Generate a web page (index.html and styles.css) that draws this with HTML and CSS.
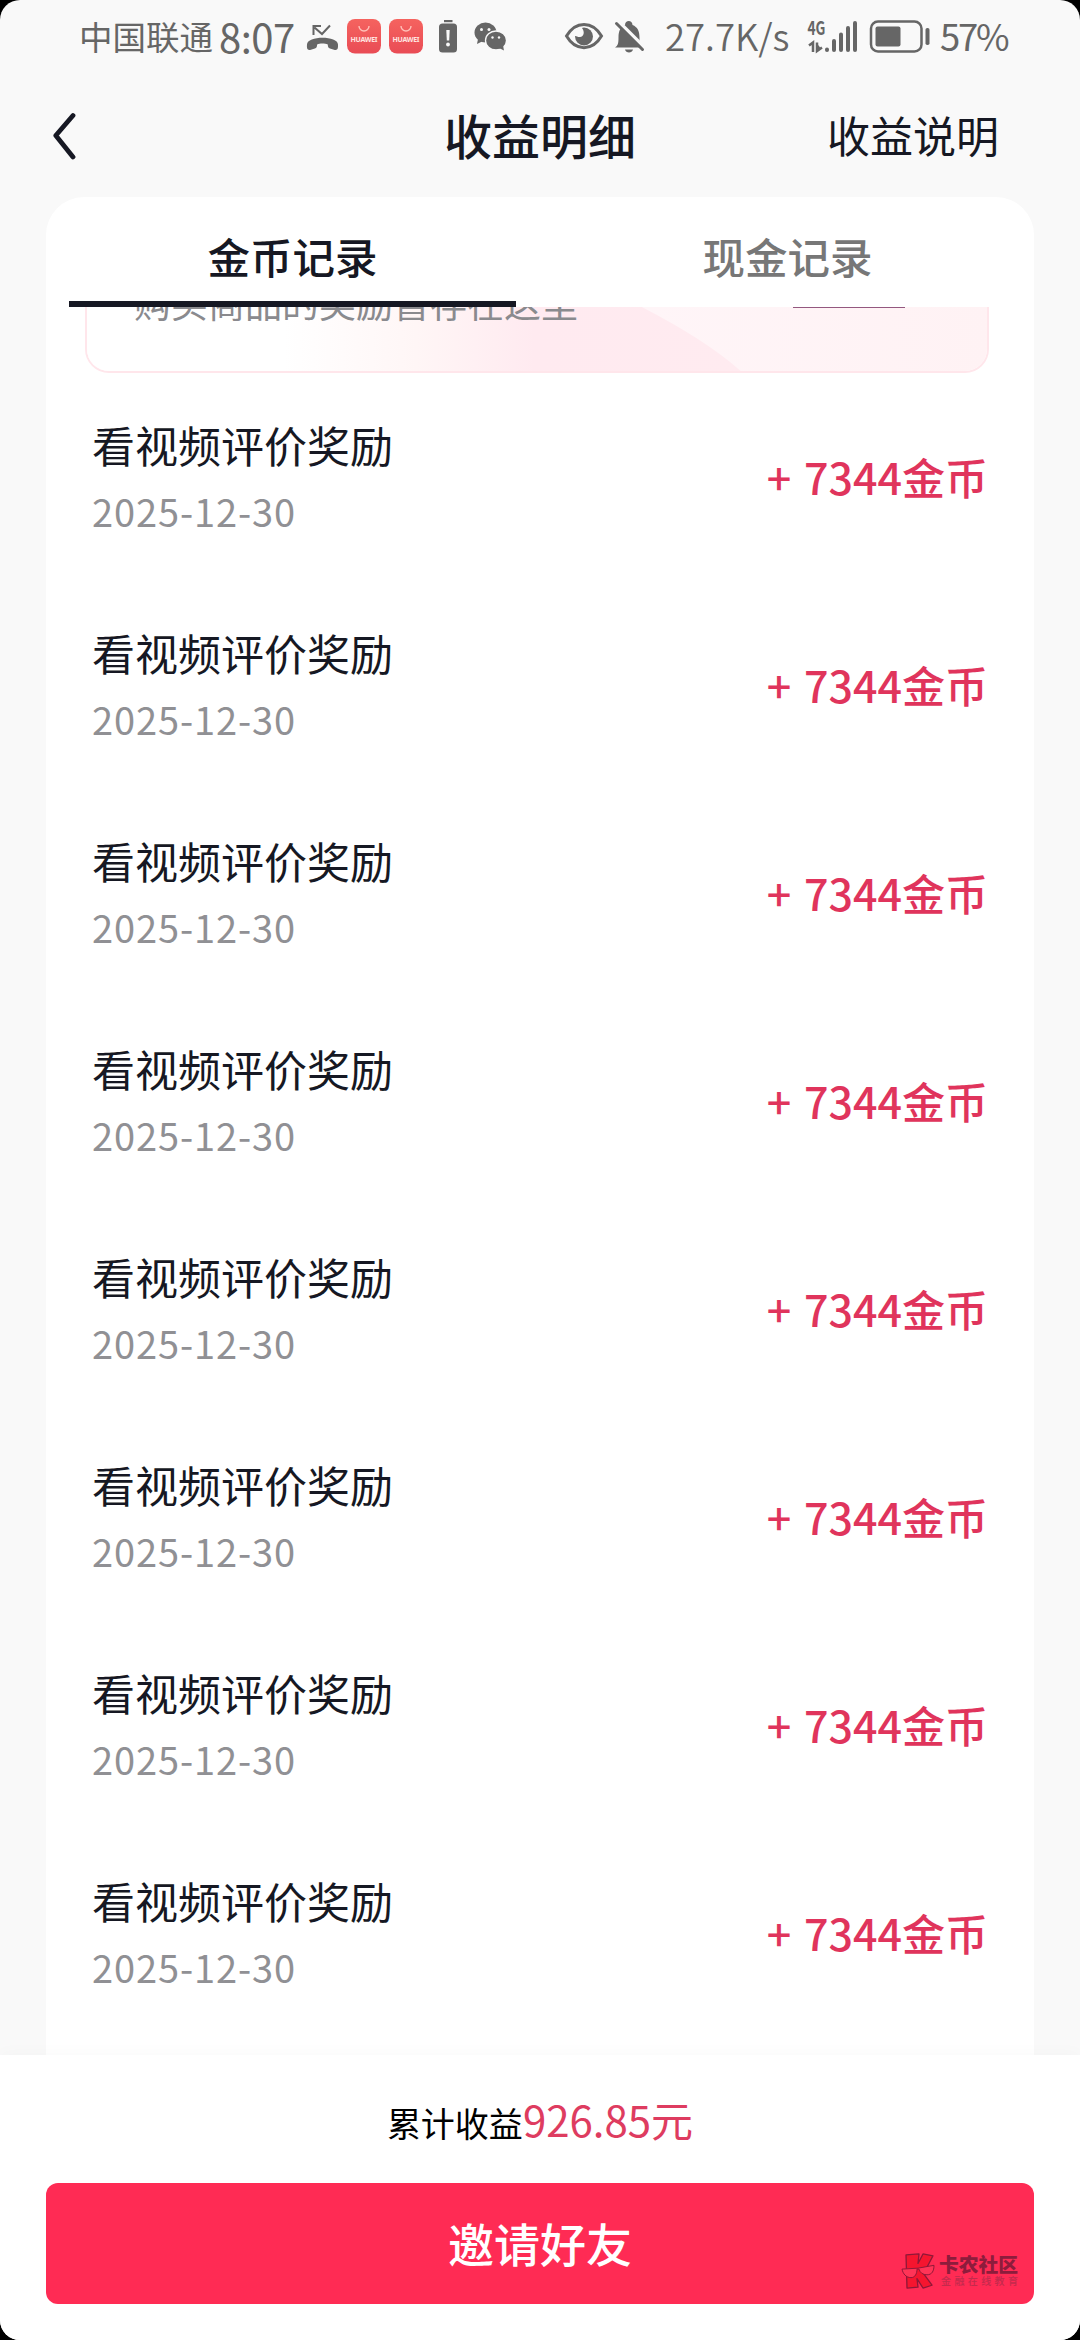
FILE: index.html
```html
<!DOCTYPE html>
<html lang="zh-CN">
<head>
<meta charset="utf-8">
<title>收益明细</title>
<link rel="stylesheet" href="styles.css">
</head>
<body>
<div class="screen">
  <div class="status">
    <span class="carrier">中国联通</span>
    <span class="clock">8:07</span>
    <svg class="ic ic-call" width="34" height="40" viewBox="305 18 34 40"><path d="M307 45.500c0-9 31-9 31 0v2c0 3.500-2 3.800-4 3.200l-4-1.200c-1.600-.5-2.200-1.500-2.200-4-3-1.300-8-1.300-10.700 0 0 2.500-.6 3.500-2.200 4l-4 1.200c-2 .6-4 .3-4-3.200z" fill="#666"/><path d="M313.500 36V27H321M314.500 28.500l7.500 6.500L330 26.500" fill="none" stroke="#666" stroke-width="2"/></svg>
    <svg class="ic ic-app1" width="34" height="40" viewBox="0 0 34 40"><use href="#hw"/></svg>
    <svg class="ic ic-app2" width="34" height="40" viewBox="0 0 34 40">
      <defs><linearGradient id="g" x2="0" y2="1"><stop stop-color="#f5635f"/><stop offset="1" stop-color="#e94c55"/></linearGradient></defs>
      <g id="hw"><rect y="2" width="34" height="34.500" rx="8" fill="url(#g)"/><path d="M12 9a5 5 0 0 0 10 0" fill="none" stroke="#ffc0b8" stroke-width="1.400"/><text x="17" y="24.500" text-anchor="middle" textLength="27" class="hw-text">HUAWEI</text></g>
    </svg>
    <svg class="ic ic-alert" width="20" height="40" viewBox="438 18 20 40"><rect x="444" y="21" width="8.500" height="2.200" fill="#666"/><rect x="439" y="24.500" width="18" height="29" rx="3.500" fill="#666"/><path d="M446.300 31h3.400l-.5 10.500h-2.400z" fill="#f9f9f9"/><circle cx="448" cy="45.500" r="1.900" fill="#f9f9f9"/></svg>
    <svg class="ic ic-chat" width="33" height="40" viewBox="474 18 33 40"><path d="M478 40l-1 5 5-2.500z" fill="#666"/><ellipse cx="485.500" cy="33.500" rx="11" ry="10" fill="#666"/><ellipse cx="496" cy="41.500" rx="10.500" ry="9.500" fill="#666" stroke="#f9f9f9" stroke-width="1.300"/><path d="M499 49l5 2.500-1-5z" fill="#666"/><g fill="#f9f9f9"><circle cx="481.500" cy="30.500" r="1.500"/><circle cx="489" cy="30.500" r="1.500"/><circle cx="492.500" cy="38.500" r="1.200"/><circle cx="499" cy="38.500" r="1.200"/></g></svg>
    <svg class="ic ic-eye" width="40" height="40" viewBox="564 18 40 40"><path d="M566.500 37c9-15.500 26-15.500 35 0-9 15.500-26 15.500-35 0z" fill="none" stroke="#666" stroke-width="3"/><circle cx="584" cy="37.500" r="9" fill="#666"/><path d="M576 29h6c3 4 2 8.500-2 9-2.500.3-3.500-1.500-5.500-1z" fill="#f9f9f9"/></svg>
    <svg class="ic ic-bell" width="32" height="40" viewBox="613 18 32 40"><path d="M615 48.500c3-2 3.500-4 3.500-10 0-7 2-10.500 6.500-12.500 0-5.500 7.500-5.500 7.500 0 5 2 7 6 7 12.500 0 6 .5 8 3 10z" fill="#666"/><path d="M625 50.500h8c-.8 4-7.200 4-8 0z" fill="#666"/><path d="M618.500 22.500L646 50" stroke="#f9f9f9" stroke-width="3.500"/><path d="M616.500 24.500L642.500 50.500" stroke="#666" stroke-width="3" stroke-linecap="round"/></svg>
    <span class="speed">27.7K/s</span>
    <svg class="ic ic-signal" width="52" height="40" viewBox="807 18 52 40"><text x="807.500" y="36" textLength="18" lengthAdjust="spacingAndGlyphs" class="net-text">4G</text><g stroke="#666" stroke-width="4" stroke-linecap="round"><path d="M827 50.500v.5M834 42v9M841 35.500V51M848 29v22M855 24v27"/></g><path d="M809 46.500l4-3V53M817 43.500V52l5-3.500M817.500 47l2 3" fill="none" stroke="#666" stroke-width="2.500"/></svg>
    <svg class="ic ic-batt" width="62" height="40" viewBox="869 18 62 40"><rect x="871" y="22.500" width="50.500" height="30" rx="7" fill="none" stroke="#666" stroke-width="2.500"/><rect x="875.500" y="27.500" width="25" height="20" rx="2" fill="#666"/><rect x="925.500" y="29" width="4" height="17" rx="1.800" fill="#666"/></svg>
    <span class="percent">57%</span>
  </div>
  <header class="header">
    <svg class="back" width="24" height="48" viewBox="53 115 24 48"><path d="M73 118.500L55.800 138.500L73 160" fill="none" stroke="#161823" stroke-width="4.800" stroke-linecap="round" stroke-linejoin="round"/></svg>
    <h1 class="title">收益明细</h1>
    <span class="help">收益说明</span>
  </header>
  <main class="card">
    <nav class="tabs">
      <span class="tab active">金币记录</span>
      <span class="tab">现金记录</span>
    </nav>
    <div class="scroll">
      <section class="banner">
        <svg class="shade" width="903" height="120" viewBox="0 0 903 120"><defs><linearGradient id="b"><stop offset=".3" stop-color="#fff"/><stop offset=".5" stop-color="#fff6f6"/><stop offset=".68" stop-color="#ffeaf0"/><stop offset="1" stop-color="#ffebf0"/></linearGradient><linearGradient id="d"><stop offset=".5" stop-color="#fff6f9"/><stop offset="1" stop-color="#fff2f4"/></linearGradient></defs><path d="M0 0h903v120H0z" fill="url(#d)"/><path d="M0 0H440Q600 65 658 120H0z" fill="url(#b)"/></svg>
        <span class="banner-text">购买商品的奖励暂存在这里</span>
        <span class="banner-btn"></span>
      </section>
      <ul class="list">
        <li class="row"><div><div class="name">看视频评价奖励</div><div class="date">2025-12-30</div></div><div class="amount">+ 7344金币</div></li>
        <li class="row"><div><div class="name">看视频评价奖励</div><div class="date">2025-12-30</div></div><div class="amount">+ 7344金币</div></li>
        <li class="row"><div><div class="name">看视频评价奖励</div><div class="date">2025-12-30</div></div><div class="amount">+ 7344金币</div></li>
        <li class="row"><div><div class="name">看视频评价奖励</div><div class="date">2025-12-30</div></div><div class="amount">+ 7344金币</div></li>
        <li class="row"><div><div class="name">看视频评价奖励</div><div class="date">2025-12-30</div></div><div class="amount">+ 7344金币</div></li>
        <li class="row"><div><div class="name">看视频评价奖励</div><div class="date">2025-12-30</div></div><div class="amount">+ 7344金币</div></li>
        <li class="row"><div><div class="name">看视频评价奖励</div><div class="date">2025-12-30</div></div><div class="amount">+ 7344金币</div></li>
        <li class="row"><div><div class="name">看视频评价奖励</div><div class="date">2025-12-30</div></div><div class="amount">+ 7344金币</div></li>
      </ul>
    </div>
  </main>
  <footer class="footer">
    <p class="total">累计收益<b class="sum">926.85元</b></p>
    <div class="invite">邀请好友
      <div class="mark">
        <svg width="34" height="36" viewBox="0 0 34 38" preserveAspectRatio="none"><g fill="#f5152f" stroke="#8d1838" stroke-width="1.300" stroke-linejoin="round"><path d="M5 2l13-1-1 10L22 1l10 2-7 14-3 4 9 13-9 3-6-10 1 9-11 1z"/><path d="M1 17l16-1 16-3c0 6-2 10-7 10-4 0-7-2-8-6h-2c0 5-2 9-6 9-5 0-8-4-9-9z" fill="#ff3457" stroke-width="1"/></g></svg>
        <div class="mark-words"><span class="mark-name">卡农社区</span><span class="mark-sub">金融在线教育</span></div>
      </div>
    </div>
  </footer>
</div>
</body>
</html>
```
FILE: styles.css
```css
* { box-sizing: border-box; margin: 0; padding: 0; }
html, body { background: #000; }
body { font-family: "Noto Sans CJK SC", "Noto Sans", sans-serif; color: #161823; }
.screen { width: 1080px; height: 2340px; display: flex; flex-direction: column; background: #f9f9f9; border-radius: 20px; overflow: hidden; }

.status { height: 57px; padding: 17px 0 0 79px; display: flex; align-items: center; color: #666; white-space: nowrap; flex: none; }
.status span { flex: none; line-height: 38px; height: 40px; }
.ic { flex: none; display: block; }
.carrier { width: 140px; font-size: 33.500px; }
.clock { width: 86px; font-size: 40px; letter-spacing: -.5px; }
.ic-app1 { margin-left: 8px; }
.ic-app2 { margin-left: 8px; }
.ic-alert { margin-left: 15px; }
.ic-chat { margin-left: 16px; }
.ic-eye { margin-left: 57px; }
.ic-bell { margin-left: 9px; }
.speed { width: 142px; padding-left: 20px; margin-right: 20px; font-size: 36.500px; font-weight: 350; }
.ic-batt { margin-left: 10px; }
.percent { margin-left: 9px; font-size: 36.500px; letter-spacing: -2.300px; }
.hw-text { font: 700 7px "Noto Sans", sans-serif; fill: #ffe4e0; }
.net-text { font: 700 19px "Noto Sans CJK SC", sans-serif; fill: #666; }

.header { height: 140px; flex: none; padding: 14px 81px 0 53px; display: grid; grid-template-columns: 1fr auto 1fr; align-items: center; }
.back { margin-top: 4px; }
.title { font-size: 48px; font-weight: 500; line-height: 60px; margin-left: 28px; }
.help { justify-self: end; font-size: 43px; line-height: 60px; }

.card { flex: 1; min-height: 0; margin: 0 46px; display: flex; flex-direction: column; background: #fff; border-radius: 38px 38px 0 0; overflow: hidden; }
.tabs { height: 110px; flex: none; padding: 0 23px; display: flex; justify-content: space-between; }
.tab { width: 447px; height: 110px; line-height: 117px; text-align: center; font-size: 42.500px; font-weight: 500; color: #777; }
.tab.active { color: #161823; border-bottom: 6px solid #161823; }
.scroll { flex: 1; min-height: 0; overflow: hidden; }
.banner { position: relative; width: 904px; height: 120px; margin: -54px 0 0 39px; padding: 20px 82px 0 47px; border: 2px solid #ffe6eb; border-radius: 24px; overflow: hidden; display: flex; justify-content: space-between; align-items: flex-start; }
.shade { position: absolute; inset: 0; }
.banner-text { position: relative; font-size: 37px; line-height: 54px; color: #8a8a8e; }
.banner-btn { position: relative; width: 112px; height: 33px; border-bottom: 1px solid #94587f; }
.list { list-style: none; padding: 26px 46px 0 46px; }
.row { height: 208px; padding-top: 15px; display: flex; justify-content: space-between; align-items: flex-start; }
.name { font-size: 43px; line-height: 60px; }
.date { font-size: 38px; line-height: 60px; margin-top: 7px; color: #909094; letter-spacing: .9px; font-weight: 400; }
.amount { font-size: 43px; line-height: 60px; margin-top: 32px; font-weight: 500; color: #e0345c; word-spacing: 3px; }

.footer { height: 285px; flex: none; padding: 32px 46px 0; background: #fff; box-shadow: 0 -2px 16px rgba(0,0,0,.025); position: relative; }
.total { height: 96px; text-align: center; font-size: 34px; line-height: 64px; color: #000; }
.sum { font-size: 42px; font-weight: 400; color: #de3c60; }
.invite { position: relative; height: 121px; border-radius: 12px; background: #ff2b54; color: #fff; font-size: 46px; font-weight: 500; line-height: 119px; text-align: center; }
.mark { position: absolute; right: 15px; bottom: 15px; display: flex; gap: 4px; line-height: 1; color: #8d1c3c; }
.mark-words { display: flex; flex-direction: column; text-align: left; width: 80px; }
.mark-name { font-size: 19.800px; font-weight: 900; line-height: 21px; }
.mark-sub { font-size: 10px; letter-spacing: 3.400px; line-height: 14px; margin-left: 2px; color: #c32a4d; white-space: nowrap; }
```
